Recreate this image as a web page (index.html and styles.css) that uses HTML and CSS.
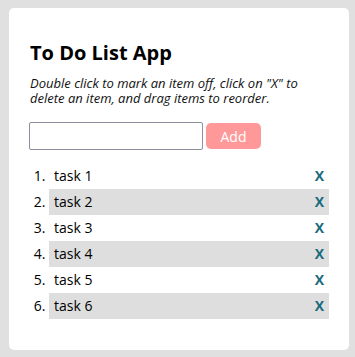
FILE: index.html
```html
<!DOCTYPE html>
<html lang="en">
<head>
    <meta charset="UTF-8">
    <meta name="viewport" content="width=device-width, initial-scale=1.0">
    <title>To Do List App</title>
    <link rel="stylesheet" href="styles.css">
</head>
<body>
    <div class="card">
        <h1 class="title">To Do List App</h1>
        <p class="hint">Double click to mark an item off, click on "X" to delete an item, and drag items to reorder.</p>
        <form class="add-form">
            <input type="text" class="task-input">
            <button class="btn" type="submit">Add</button>
        </form>
        <ol class="list">
            <li><span class="task">task 1</span><span class="delete">X</span></li>
            <li><span class="task">task 2</span><span class="delete">X</span></li>
            <li><span class="task">task 3</span><span class="delete">X</span></li>
            <li><span class="task">task 4</span><span class="delete">X</span></li>
            <li><span class="task">task 5</span><span class="delete">X</span></li>
            <li><span class="task">task 6</span><span class="delete">X</span></li>
        </ol>
    </div>
</body>
</html>
```

FILE: styles.css
```css
body {
    font-family: "Open Sans", sans-serif;
    margin: 0;
    padding: 8px 6px 7px 9px;
    background-color: #e0e0e0;
}
.card {
    background-color: #ffffff;
    border-radius: 5px;
    padding: 11px 20px 31px 20px;
    width: 300px;
}
.title {
    font-size: 20px;
    font-weight: 700;
    color: #000;
    margin: 20px 0 10px 1px;
}
.hint {
    font-size: 13px;
    font-style: italic;
    line-height: 15px;
    color: #111;
    margin: 0 0 16px 1px;
}
.add-form {
    display: flex;
    align-items: center;
    gap: 3px;
    margin-bottom: 13px;
}
.task-input {
    width: 170px;
    height: 24px;
    padding: 1px;
    border: 1px solid #8f8f9d;
    border-radius: 2px;
    margin: 0;
}
.btn {
    width: 55px;
    height: 26px;
    background-color: #ff9999;
    color: #ffffff;
    border: none;
    border-radius: 5px;
    font-family: "Open Sans", sans-serif;
    font-size: 14px;
    padding: 0;
}
.list {
    margin: 0;
    padding-left: 20px;
    font-size: 14px;
    color: #000;
}
.list li {
    height: 26px;
    line-height: 26px;
}
.list li:nth-child(even) {
    background-color: #dedede;
}
.task {
    padding-left: 5px;
}
.delete {
    float: right;
    margin-right: 5px;
    font-size: 14px;
    font-weight: 700;
    color: #1a6b7c;
}
```
